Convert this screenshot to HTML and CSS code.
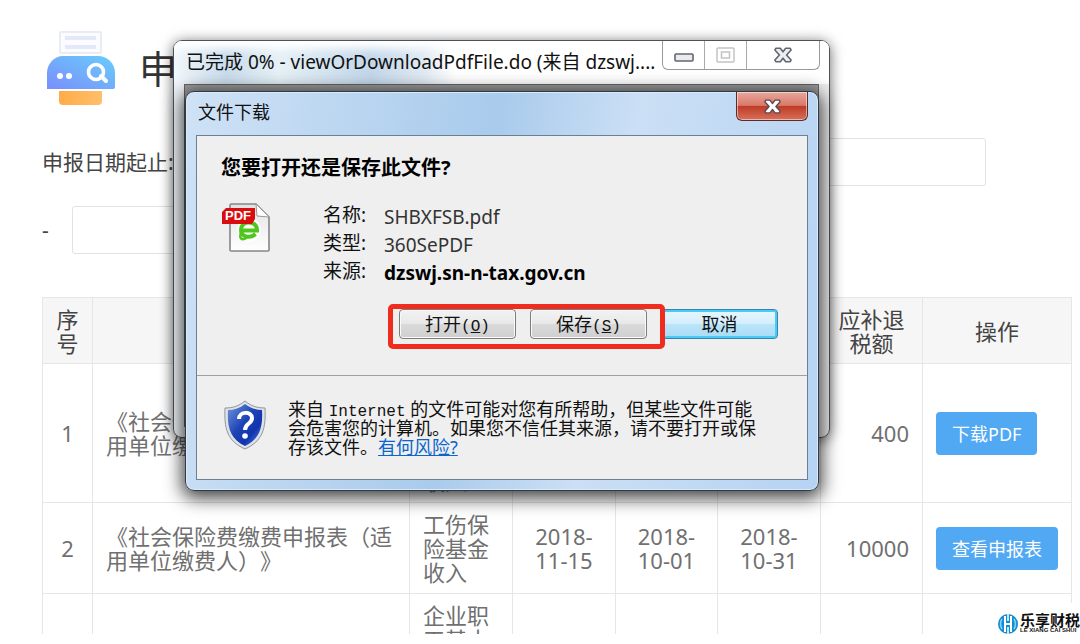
FILE: index.html
```html
<!DOCTYPE html>
<html lang="zh-CN">
<head>
  <meta charset="UTF-8">
  <title>申报</title>
  <link rel="stylesheet" href="styles.css">
</head>
<body>
  <main class="page">
    <header class="header">
      <svg class="printer" viewBox="0 0 72 76" aria-hidden="true">
        <defs>
          <linearGradient id="printerBlue" x1="0" y1="1" x2="1" y2="0">
            <stop offset="0" stop-color="#7a8efd"/>
            <stop offset="1" stop-color="#69cdfb"/>
          </linearGradient>
          <linearGradient id="printerOrange" x1="0" y1="0" x2="1" y2="0">
            <stop offset="0" stop-color="#ffac48"/>
            <stop offset="1" stop-color="#ffbf69"/>
          </linearGradient>
        </defs>
        <rect x="15" y="2" width="41" height="21" rx="1" fill="#fcfcff" stroke="#e8ecf7" stroke-width="2"/>
        <path d="M20 8h31M20 17h31" stroke="#e3e9fa" stroke-width="4"/>
        <path d="M2 59V43c0-9 7-17 16-17h35c9 0 17 7 17 17v14q0 2-2 2z" fill="url(#printerBlue)"/>
        <circle cx="15" cy="46" r="3" fill="#fff"/>
        <circle cx="24" cy="46" r="3" fill="#fff"/>
        <circle cx="51" cy="42" r="7.5" fill="none" stroke="#fff" stroke-width="3.6"/>
        <path d="M56 46l5 5" stroke="#fff" stroke-width="4" stroke-linecap="round"/>
        <path d="M14 61h43v10q0 4-4 4H18q-4 0-4-4z" fill="url(#printerOrange)"/>
      </svg>
      <h1>申</h1>
    </header>

    <form class="filter">
      <div class="filter-row">
        <label for="dateFrom">申报日期起止:</label>
        <input type="text" id="dateFrom">
      </div>
      <div class="filter-row half">
        <label class="dash" for="dateTo">-</label>
        <input type="text" id="dateTo">
      </div>
    </form>

    <table class="list">
      <colgroup>
        <col class="c-no">
        <col>
        <col class="c-mid">
        <col class="c-mid">
        <col class="c-date">
        <col class="c-mid">
        <col class="c-date">
        <col class="c-action">
      </colgroup>
      <thead>
        <tr>
          <th>序<br>号</th>
          <th></th>
          <th></th>
          <th></th>
          <th></th>
          <th></th>
          <th>应补退<br>税额</th>
          <th>操作</th>
        </tr>
      </thead>
      <tbody>
        <tr>
          <td>1</td>
          <td class="name">《社会保险费缴费申报表（适用单位缴费人）》</td>
          <td class="kind">企业职工基本养老保险基金收入</td>
          <td></td>
          <td></td>
          <td></td>
          <td class="amount">400</td>
          <td class="action"><button type="button">下载PDF</button></td>
        </tr>
        <tr>
          <td>2</td>
          <td class="name">《社会保险费缴费申报表（适用单位缴费人）》</td>
          <td class="kind">工伤保险基金收入</td>
          <td>2018-<br>11-15</td>
          <td>2018-<br>10-01</td>
          <td>2018-<br>10-31</td>
          <td class="amount">10000</td>
          <td class="action"><button type="button">查看申报表</button></td>
        </tr>
        <tr>
          <td></td>
          <td></td>
          <td class="kind">企业职工基本养老保险基金收入</td>
          <td></td>
          <td></td>
          <td></td>
          <td></td>
          <td></td>
        </tr>
      </tbody>
    </table>
  </main>

  <!-- 下载进度窗口 -->
  <section class="window progress">
    <div class="progress-bar">
      <h2>已完成 0% - viewOrDownloadPdfFile.do (来自 dzswj....</h2>
      <div class="controls">
        <button type="button" aria-label="最小化">
          <svg class="minimize" width="20" height="16" viewBox="0 0 20 16"><rect x="1" y="7" width="18" height="7" rx="1" fill="#e9ebef" stroke="#62666e" stroke-width="1.6"/></svg>
        </button>
        <button type="button" aria-label="最大化" disabled>
          <svg width="20" height="16" viewBox="0 0 20 16"><rect x="1" y="1" width="17" height="14" rx="1" fill="none" stroke="#c3c3c3" stroke-width="1.5"/><rect x="5.5" y="5" width="8" height="6" fill="none" stroke="#c3c3c3" stroke-width="1.5"/></svg>
        </button>
        <button type="button" class="wide" aria-label="关闭">
          <svg width="18" height="16" viewBox="0 0 20 17"><path d="M2 1h5l3 4 3-4h5l1 2-5 5.5 5 5.5-1 2h-5l-3-4-3 4H2l-1-2 5-5.5L1 3z" fill="#eceef1" stroke="#62666e" stroke-width="1.8" stroke-linejoin="round"/></svg>
        </button>
      </div>
    </div>
    <div class="progress-body"></div>
  </section>

  <!-- 文件下载对话框 -->
  <section class="window dialog">
    <div class="dialog-bar">
      <h2>文件下载</h2>
      <button type="button" class="close" aria-label="关闭">
        <svg width="17" height="15" viewBox="0 0 20 17"><path d="M2 1h5l3 4 3-4h5l1 2-5 5.5 5 5.5-1 2h-5l-3-4-3 4H2l-1-2 5-5.5L1 3z" fill="#fff" stroke="#5c4a55" stroke-width="1.6" stroke-linejoin="round"/></svg>
      </button>
    </div>
    <div class="dialog-body">
      <div class="question">
        <h3>您要打开还是保存此文件?</h3>
        <div class="file">
          <svg class="file-icon" viewBox="0 0 50 50" aria-hidden="true">
            <defs>
              <linearGradient id="paper" x1="0" y1="0" x2="0" y2="1">
                <stop offset="0" stop-color="#e2e2e2"/>
                <stop offset="1" stop-color="#fff"/>
              </linearGradient>
            </defs>
            <path d="M10 1h25l13 13v33q0 1-1 1H10q-1 0-1-1V2z" fill="url(#paper)" stroke="#868686" stroke-width="1.6"/>
            <path d="M35 1l1 12 12 1z" fill="#fff" stroke="#999"/>
            <circle cx="28" cy="27" r="12" fill="#fff" opacity=".8"/>
            <path d="M21 27.500h15c0-6-4-8-8-8-5 0-8 3-8 7.500 0 7 9 9 14.500 4" fill="none" stroke="#50c51c" stroke-width="4"/>
            <path d="M20.500 29c-3 6 0 9 5 6" fill="none" stroke="#50c51c" stroke-width="2.500"/>
            <path d="M5 5h29v11l-3 5H1V9z" fill="#d90d0d"/>
            <text x="4" y="17" class="file-tag">PDF</text>
          </svg>
          <dl class="info">
            <dt>名称:</dt><dd>SHBXFSB.pdf</dd>
            <dt>类型:</dt><dd>360SePDF</dd>
            <dt>来源:</dt><dd class="host">dzswj.sn-n-tax.gov.cn</dd>
          </dl>
        </div>
        <div class="buttons">
          <button type="button">打开<span class="key">(<u>O</u>)</span></button>
          <button type="button">保存<span class="key">(<u>S</u>)</span></button>
          <button type="button" class="default">取消</button>
          <div class="mark"></div>
        </div>
      </div>
      <div class="warning">
        <svg class="shield" viewBox="0 0 42 50" aria-hidden="true">
          <defs>
            <linearGradient id="shieldBlue" x1="0" y1="0" x2="1" y2="1">
              <stop offset="0" stop-color="#7197dc"/>
              <stop offset=".45" stop-color="#1d43b5"/>
              <stop offset=".7" stop-color="#1233ad"/>
              <stop offset="1" stop-color="#4e8df0"/>
            </linearGradient>
          </defs>
          <path d="M21 1c6 5 12 7 20 7 1 20-2 33-20 41C3 41 0 28 1 8c8 0 14-2 20-7z" fill="#dfe3e8" stroke="#8f959c"/>
          <path d="M21 4c5 4 11 6 17 6 1 17-2 29-17 36C6 39 3 27 4 10c6 0 12-2 17-6z" fill="url(#shieldBlue)"/>
          <path d="M15 19c0-8 13-8 13-1 0 6-7 5-7 12" fill="none" stroke="#fff" stroke-width="4"/>
          <circle cx="21" cy="36" r="2.8" fill="#fff"/>
        </svg>
        <p>来自 <span class="latin">Internet</span> 的文件可能对您有所帮助，但某些文件可能<br>会危害您的计算机。如果您不信任其来源，请不要打开或保<br>存该文件。<a href="#">有何风险?</a></p>
      </div>
    </div>
  </section>

  <aside class="brand">
    <svg width="22" height="22" viewBox="0 0 22 22" aria-hidden="true">
      <circle cx="11" cy="11" r="10" fill="#128fd0"/>
      <path d="M8 3v16M14 3v16M8 11h6" stroke="#fff" stroke-width="2" fill="none"/>
      <path d="M5 6q-3 5 0 10M17 6q3 5 0 10" stroke="#8fd0f0" stroke-width="1.5" fill="none"/>
      <path d="M11 0v8M11 14v8" stroke="#fff" stroke-width="1.5"/>
    </svg>
    <div>
      <strong>乐享财税</strong>
      <small>LE XIANG CAI SHUI</small>
    </div>
  </aside>
</body>
</html>
```
FILE: styles.css
```css
* { box-sizing: border-box; }
body { margin: 0; background: #fff; color: #444; font: 22px/24px "Noto Sans", "Noto Sans CJK SC", sans-serif; text-spacing-trim: space-all; }
h1, h2, h3, p, dl, dd { margin: 0; font-weight: normal; }
button, input { font-family: inherit; }

.page { height: calc(100vh - 10px); overflow: hidden; padding: 29px 8px 0 42px; }
.header { display: flex; align-items: center; gap: 22px; height: 78px; padding-left: 3px; }
.header h1 { font-size: 38px; line-height: 76px; color: #333; }
.printer { width: 72px; height: 76px; }

.filter { display: flex; flex-direction: column; gap: 20px; margin: 31px 86px 43px 0; }
.filter-row { display: flex; align-items: center; gap: 10px; }
.filter-row.half { width: 50%; }
.filter-row label { font-size: 21px; white-space: nowrap; }
.filter-row .dash { width: 20px; }
.filter input { flex: 1; min-width: 0; height: 48px; border: 1px solid #e2e2e2; border-radius: 3px; }

.list { width: 100%; table-layout: fixed; border-collapse: collapse; }
.list th, .list td { padding: 9px 13px; border: 1px solid #e6e6e6; text-align: center; font-weight: normal; }
.list th { height: 66px; background: #f6f6f6; color: #444; padding: 8px 4px; }
.list td { color: #707070; }
.list .name, .list .kind, .list .action { text-align: left; }
.list .amount { text-align: right; }
.c-no { width: 50px; }
.c-mid { width: 103px; }
.c-date { width: 102px; }
.c-action { width: 149px; }
.action button { display: block; height: 43px; padding: 0 16px; border: 0; border-radius: 4px; background: #52a9f3; color: #fff; font-size: 18px; }

.window { position: absolute; border: 1px solid #4d5257; border-radius: 9px; color: #111; }
.window h2 { white-space: nowrap; }
.progress { left: 173px; top: 40px; width: 657px; height: 398px; padding: 0 10px 10px; display: flex; flex-direction: column; background: linear-gradient(90deg, #eef3f7, #fdfdfd 25%, #fff 80%, #eee); box-shadow: 0 2px 14px rgba(0, 0, 0, .6); }
.progress-bar { display: flex; justify-content: space-between; height: 43px; margin: 0 -10px; padding: 0 9px 0 12px; border-radius: 8px 8px 0 0; background: linear-gradient(90deg, #f2f7fb, #c9dcec 8%, #e6f1f6 16%, #c3d7ea 30%, #dfe9f2 38%, #fff 43%); box-shadow: inset 0 14px 10px -6px #fff; }
.progress-bar h2 { font-size: 19px; line-height: 42px; }
.progress-body { flex: 1; border: 1px solid #666; background: #9c9c9c; }
.controls { display: flex; height: 29px; border: 1px solid #999; border-top: 0; border-radius: 0 0 6px 6px; background: #fff; }
.controls button { display: grid; place-items: center; width: 42px; padding: 0; border: 0; border-right: 1px solid #aaa; background: none; }
.controls .wide { width: 72px; border-right: 0; }

.dialog { left: 185px; top: 91px; width: 634px; height: 400px; padding: 0 10px 10px; display: flex; flex-direction: column; border-color: #303a45; background: linear-gradient(100deg, #cfe2f6, #a9cbec 45%, #cbdff5 65%, #b5d3f3); box-shadow: inset 0 0 0 1px #d8eafc, 0 4px 18px 3px rgba(0, 0, 0, .75); }
.dialog-bar { display: flex; justify-content: space-between; height: 43px; }
.dialog-bar h2 { font-size: 18px; line-height: 40px; padding-left: 2px; }
.close { display: grid; place-items: center; width: 72px; height: 29px; padding: 0; border: 1px solid #5c2a2a; border-top: 0; border-radius: 0 0 6px 6px; background: linear-gradient(#e8a79b, #d9796a 48%, #bd3a25 50%, #d9705a); box-shadow: inset 0 0 0 1px rgba(255, 255, 255, .5); }
.dialog-body { flex: 1; display: flex; flex-direction: column; border: 1px solid #6b7f95; background: #efefef; }
.question { flex: 1; padding: 20px 24px 0; border-bottom: 1px solid #a0a0a0; }
.question h3 { font-size: 20px; font-weight: bold; color: #000; }
.file { display: flex; gap: 52px; margin-top: 23px; }
.file-icon { width: 50px; height: 50px; }
.file-tag { font: bold 13px "Liberation Sans", sans-serif; fill: #fff; }
.info { display: grid; grid-template-columns: 61px auto; grid-auto-rows: 28px; font-size: 19px; line-height: 24px; }
.info dd { padding-top: 2px; color: #333; }
.info .host { font-weight: bold; color: #000; }
.buttons { position: relative; display: flex; justify-content: flex-end; gap: 14px; margin: 22px 5px 0 0; }
.buttons button { width: 117px; height: 30px; padding: 0; border: 1px solid #7c7c7c; border-radius: 4px; background: linear-gradient(#f2f2f2, #e9e9e9 48%, #dadada 50%, #cfcfcf); box-shadow: inset 0 0 0 1px #fafafa; color: #111; font-size: 18px; line-height: 24px; }
.buttons .default { border-color: #3c7fb1; background: linear-gradient(#e6f6fe, #d5effc 48%, #bce5fa 50%, #a8dbf5); box-shadow: inset 0 0 0 2px #45cdf5; }
.key { font: 16px "Liberation Mono", monospace; }
.mark { position: absolute; right: 113px; top: -5px; width: 277px; height: 45px; border: 5px solid #f02c1e; border-radius: 5px; }
.warning { display: flex; gap: 22px; height: 103px; padding: 24px 27px 0; }
.shield { flex: none; width: 42px; height: 50px; }
.warning p { font-size: 18px; line-height: 19px; color: #111; white-space: nowrap; }
.warning a { color: #0b66cc; }
.latin { font-family: "Liberation Mono", monospace; font-size: 16px; line-height: 1px; }

.brand { position: absolute; right: 0; bottom: 0; display: flex; align-items: center; gap: 1px; height: 41px; background: #fff; color: #111; }
.brand strong { display: block; font-size: 15px; line-height: 14px; }
.brand small { display: block; font: bold 6px/7px "Liberation Sans", sans-serif; white-space: nowrap; }
```
